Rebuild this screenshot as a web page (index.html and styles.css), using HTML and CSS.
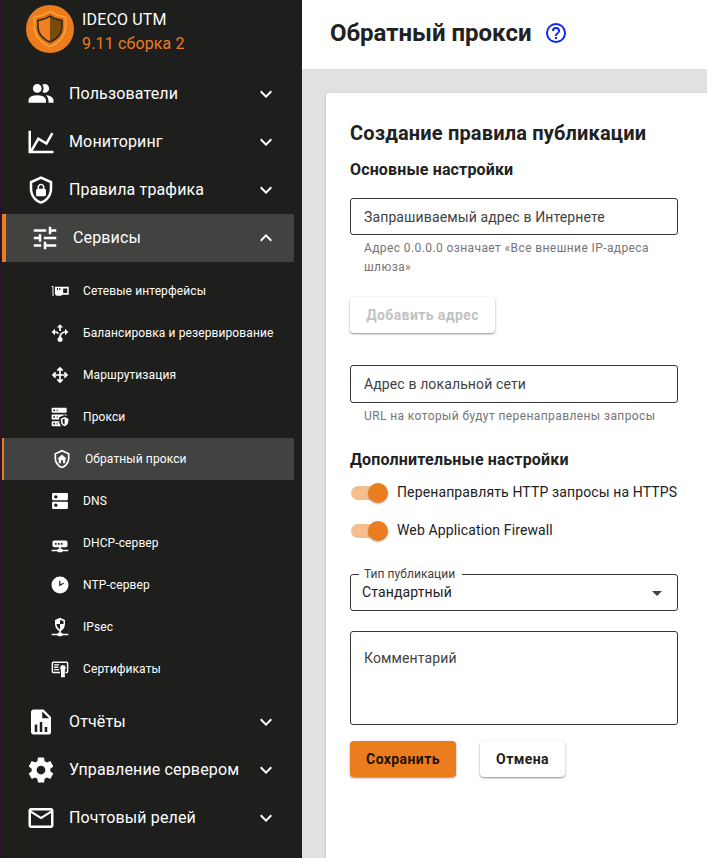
FILE: index.html
```html
<!DOCTYPE html>
<html lang="ru">
<head>
<meta charset="utf-8">
<title>Обратный прокси</title>
<link rel="stylesheet" href="styles.css">
</head>
<body>
<div class="app">
  <aside class="sidebar">
    <div class="brand">
      <svg class="logo" viewBox="0 0 48 48">
        <circle cx="24" cy="24" r="24" fill="#ec7d1e"/>
        <path d="M24 6.500C28.500 9.500 33.500 11.500 39.500 12.200V21C39.500 31.500 33 37.500 24 41.500 15 37.500 8.500 31.500 8.500 21V12.200C14.500 11.500 19.500 9.500 24 6.500Z" fill="#dc7018" stroke="#fd9f30" stroke-width="1.900"/>
        <path d="M24 11C27.500 13.500 31.500 15 36 15.500V22C36 29.500 31 34 24 37Z" fill="#7a4a0c"/>
        <path d="M24 11C20.500 13.500 16.500 15 12 15.500V22C12 29.500 17 34 24 37Z" fill="#f08020"/>
        <path d="M24 11C27.500 13.500 31.500 15 36 15.500V22C36 29.500 31 34 24 37 17 34 12 29.500 12 22V15.500C16.500 15 20.500 13.500 24 11Z" fill="none" stroke="#272421" stroke-width="1.500"/>
      </svg>
      <div class="brand-text">
        <div class="brand-name">IDECO UTM</div>
        <div class="brand-version">9.11 сборка 2</div>
      </div>
    </div>
    <nav>
      <a class="item"><svg class="icon" viewBox="0 0 24 24"><path d="M16 17V19H2V17S2 13 9 13 16 17 16 17M12.500 7.500A3.500 3.500 0 1 0 9 11A3.500 3.500 0 0 0 12.500 7.500M15.940 13A5.320 5.320 0 0 1 18 17V19H22V17S22 13.370 15.940 13M15 4A3.390 3.390 0 0 0 13.070 4.590A5 5 0 0 1 13.070 10.410A3.390 3.390 0 0 0 15 11A3.500 3.500 0 0 0 15 4Z"/></svg><span class="label">Пользователи</span><svg class="chevron" viewBox="0 0 24 24"><path d="M7.410,8.580L12,13.170L16.590,8.580L18,10L12,16L6,10Z"/></svg></a>
      <a class="item"><svg class="icon" viewBox="0 0 24 24"><path d="M16,11.780L20.240,4.450L21.970,5.450L16.740,14.500L10.230,10.750L5.460,19H22V21H2V3H4V17.540L9.500,8Z"/></svg><span class="label">Мониторинг</span><svg class="chevron" viewBox="0 0 24 24"><path d="M7.410,8.580L12,13.170L16.590,8.580L18,10L12,16L6,10Z"/></svg></a>
      <a class="item"><svg class="icon" viewBox="0 0 24 24"><path d="M21,11C21,16.550 17.160,21.740 12,23C6.840,21.740 3,16.550 3,11V5L12,1L21,5V11M12,21C15.750,20 19,15.540 19,11.220V6.300L12,3.180L5,6.300V11.220C5,15.540 8.250,20 12,21M14.800,11V9.500C14.800,8.100 13.400,7 12,7C10.600,7 9.200,8.100 9.200,9.500V11C8.600,11 8,11.600 8,12.200V15.700C8,16.400 8.600,17 9.200,17H14.700C15.400,17 16,16.400 16,15.800V12.300C16,11.600 15.400,11 14.800,11M13.500,11H10.500V9.500C10.500,8.700 11.200,8.200 12,8.200C12.800,8.200 13.500,8.700 13.500,9.500V11Z"/></svg><span class="label">Правила трафика</span><svg class="chevron" viewBox="0 0 24 24"><path d="M7.410,8.580L12,13.170L16.590,8.580L18,10L12,16L6,10Z"/></svg></a>
      <a class="item item-active"><svg class="icon" viewBox="0 0 24 24"><path d="M3,17V19H9V17H3M3,5V7H13V5H3M13,21V19H21V17H13V15H11V21H13M7,9V11H3V13H7V15H9V9H7M21,13V11H11V13H21M15,9H17V7H21V5H17V3H15V9Z"/></svg><span class="label">Сервисы</span><svg class="chevron" viewBox="0 0 24 24"><path d="M7.410,15.410L12,10.830L16.590,15.410L18,14L12,8L6,14Z"/></svg></a>
      <div class="submenu">
        <a class="sub"><svg class="icon" viewBox="0 0 24 24"><path fill-rule="evenodd" d="M2 6H4.200V18H3V7.300H2ZM6 7H22.500V16.500H14V17.700H7.500V16.500H6ZM8.300 8.500V10.800H9.600V8.500ZM11 8.500V10.800H12.300V8.500ZM15.800 9V14.500H20.600V9Z"/></svg><span class="label">Сетевые интерфейсы</span></a>
        <a class="sub"><svg class="icon" viewBox="0 0 24 24"><path d="M12 1.500 15.800 5.500H13V9.500H11V5.500H8.200ZM2 10.800 6 7V9.800C8 9.800 9.500 10.500 10.800 12L9.600 13.600C8.500 12.400 7.500 11.800 6 11.800V14.600ZM22 10.800 18 7V9.800C14 10.200 11.200 13 11 16.800A3.100 3.100 0 1 0 13.200 16.800C13.400 14 15 12.200 18 11.800V14.600Z"/></svg><span class="label">Балансировка и резервирование</span></a>
        <a class="sub"><svg class="icon" viewBox="0 0 24 24"><path d="M13,11H18L16.500,9.500L17.920,8.080L21.840,12L17.920,15.920L16.500,14.500L18,13H13V18L14.500,16.500L15.920,17.920L12,21.840L8.080,17.920L9.500,16.500L11,18V13H6L7.500,14.500L6.080,15.920L2.160,12L6.080,8.080L7.500,9.500L6,11H11V6L9.500,7.500L8.080,6.080L12,2.160L15.920,6.080L14.500,7.500L13,6V11Z"/></svg><span class="label">Маршрутизация</span></a>
        <a class="sub"><svg class="icon" viewBox="0 0 24 24"><path d="M3,1H19A1,1 0 0,1 20,2V6A1,1 0 0,1 19,7H3A1,1 0 0,1 2,6V2A1,1 0 0,1 3,1M3,9H19A1,1 0 0,1 20,10V10.670L17.500,9.560L11,12.440V15H3A1,1 0 0,1 2,14V10A1,1 0 0,1 3,9M3,17H11C11.060,19.250 12,21.400 13.460,23H3A1,1 0 0,1 2,22V18A1,1 0 0,1 3,17M8,5H9V3H8V5M8,13H9V11H8V13M8,21H9V19H8V21M4,3V5H6V3H4M4,11V13H6V11H4M4,19V21H6V19H4M17.500,12L22,14V17C22,19.780 20.080,22.370 17.500,23C14.920,22.370 13,19.780 13,17V14L17.500,12M17.500,13.940L15,15.060V17.720C15,19.260 16.070,20.700 17.500,21.060V13.940Z"/></svg><span class="label">Прокси</span></a>
        <a class="sub sub-active"><svg class="icon" viewBox="0 0 24 24"><path d="M21,11C21,16.550 17.160,21.740 12,23C6.840,21.740 3,16.550 3,11V5L12,1L21,5V11M12,21C15.750,20 19,15.540 19,11.220V6.300L12,3.180L5,6.300V11.220C5,15.540 8.250,20 12,21M12 6.500 17.500 11.800H16V17H13.200V13.500H10.800V17H8V11.800H6.500Z"/></svg><span class="label">Обратный прокси</span></a>
        <a class="sub"><svg class="icon" viewBox="0 0 24 24"><path d="M20.500 13h-17c-.55 0-1 .45-1 1v6.500c0 .55.45 1 1 1h17c.55 0 1-.45 1-1v-6.500c0-.55-.45-1-1-1zM7 19c-1.100 0-2-.9-2-2s.9-2 2-2 2 .9 2 2-.9 2-2 2zM20.500 2.500h-17c-.55 0-1 .45-1 1v6.500c0 .55.45 1 1 1h17c.55 0 1-.45 1-1V3.500c0-.55-.45-1-1-1zM7 9c-1.100 0-2-.9-2-2s.9-2 2-2 2 .9 2 2-.9 2-2 2z"/></svg><span class="label">DNS</span></a>
        <a class="sub"><svg class="icon" viewBox="0 0 24 24"><path d="M5 9C3.900 9 3 9.900 3 11V15C3 16.110 3.900 17 5 17H11V19H10C9.450 19 9 19.450 9 20H2V22H9C9 22.550 9.450 23 10 23H14C14.550 23 15 22.550 15 22H22V20H15C15 19.450 14.550 19 14 19H13V17H19C20.110 17 21 16.110 21 15V11C21 9.900 20.110 9 19 9H5M6 12H8V14H6V12M9.500 12H11.500V14H9.500V12M13 12H15V14H13V12Z"/></svg><span class="label">DHCP-сервер</span></a>
        <a class="sub"><svg class="icon" viewBox="0 0 24 24"><path fill-rule="evenodd" d="M12 1.800A10.200 10.200 0 1 0 12 22.200 10.200 10.200 0 1 0 12 1.800ZM11 7H12.500V11.100L16.100 9.300 16.700 10.600 11 13.400Z"/></svg><span class="label">NTP-сервер</span></a>
        <a class="sub"><svg class="icon" viewBox="0 0 24 24"><path fill-rule="evenodd" d="M12 1 18 3.500V8C18 12.200 15.600 15.500 13 16.700V19H14A1 1 0 0 1 15 20H22V22H15A1 1 0 0 1 14 23H10A1 1 0 0 1 9 22H2V20H9A1 1 0 0 1 10 19H11V16.700C8.400 15.500 6 12.200 6 8V3.500ZM12 3.500V8.500H7.800C8 11.500 9.800 14 12 15V8.500H16.200V4.900Z"/></svg><span class="label">IPsec</span></a>
        <a class="sub"><svg class="icon" viewBox="0 0 24 24"><path fill-rule="evenodd" d="M4 3H20A2 2 0 0 1 22 5V15A2 2 0 0 1 20 17H18.500V15.200H20.300V4.700H3.700V15.200H12V17H4A2 2 0 0 1 2 15V5A2 2 0 0 1 4 3ZM5 6.300H11V7.900H5ZM5 9.100H10V10.700H5ZM5 12H11V13.600H5ZM15.500 6.500 16.600 8.200 18.600 7.700 18 9.700 19.600 10.900 18 12.100 18.300 14 17.800 14V22H13.200V14H12.700L13 12.100 11.400 10.900 13 9.700 12.400 7.700 14.400 8.200Z"/></svg><span class="label">Сертификаты</span></a>
      </div>
      <a class="item"><svg class="icon" viewBox="0 0 24 24"><path d="M13,9H18.500L13,3.500V9M6,2H14L20,8V20A2,2 0 0,1 18,22H6C4.890,22 4,21.100 4,20V4C4,2.890 4.890,2 6,2M7,20H9V14H7V20M11,20H13V12H11V20M15,20H17V16H15V20Z"/></svg><span class="label">Отчёты</span><svg class="chevron" viewBox="0 0 24 24"><path d="M7.410,8.580L12,13.170L16.590,8.580L18,10L12,16L6,10Z"/></svg></a>
      <a class="item"><svg class="icon" viewBox="0 0 24 24"><path d="M12,15.500A3.500,3.500 0 0,1 8.500,12A3.500,3.500 0 0,1 12,8.500A3.500,3.500 0 0,1 15.500,12A3.500,3.500 0 0,1 12,15.500M19.430,12.970C19.470,12.650 19.500,12.330 19.500,12C19.500,11.670 19.470,11.340 19.430,11L21.540,9.370C21.730,9.220 21.780,8.950 21.660,8.730L19.660,5.270C19.540,5.050 19.270,4.960 19.050,5.050L16.560,6.050C16.040,5.660 15.500,5.320 14.870,5.070L14.500,2.420C14.460,2.180 14.250,2 14,2H10C9.750,2 9.540,2.180 9.500,2.420L9.130,5.070C8.500,5.320 7.960,5.660 7.440,6.050L4.950,5.050C4.730,4.960 4.460,5.050 4.340,5.270L2.340,8.730C2.210,8.950 2.270,9.220 2.460,9.370L4.570,11C4.530,11.340 4.500,11.670 4.500,12C4.500,12.330 4.530,12.650 4.570,12.970L2.460,14.630C2.270,14.780 2.210,15.050 2.340,15.270L4.340,18.730C4.460,18.950 4.730,19.030 4.950,18.950L7.440,17.940C7.960,18.340 8.500,18.680 9.130,18.930L9.500,21.580C9.540,21.820 9.750,22 10,22H14C14.250,22 14.460,21.820 14.500,21.580L14.870,18.930C15.500,18.670 16.040,18.340 16.560,17.940L19.050,18.950C19.270,19.030 19.540,18.950 19.660,18.730L21.660,15.270C21.780,15.050 21.730,14.780 21.540,14.630L19.430,12.970Z"/></svg><span class="label">Управление сервером</span><svg class="chevron" viewBox="0 0 24 24"><path d="M7.410,8.580L12,13.170L16.590,8.580L18,10L12,16L6,10Z"/></svg></a>
      <a class="item"><svg class="icon" viewBox="0 0 24 24"><path d="M22 6C22 4.900 21.100 4 20 4H4C2.900 4 2 4.900 2 6V18C2 19.100 2.900 20 4 20H20C21.100 20 22 19.100 22 18V6M20 6L12 11L4 6H20M20 18H4V8L12 13L20 8V18Z"/></svg><span class="label">Почтовый релей</span><svg class="chevron" viewBox="0 0 24 24"><path d="M7.410,8.580L12,13.170L16.590,8.580L18,10L12,16L6,10Z"/></svg></a>
    </nav>
  </aside>
  <main class="main">
    <header class="topbar">
      <h1>Обратный прокси</h1>
      <svg class="help" viewBox="0 0 24 24"><path d="M11,18H13V16H11V18M12,2A10,10 0 0,0 2,12A10,10 0 0,0 12,22A10,10 0 0,0 22,12A10,10 0 0,0 12,2M12,20C7.590,20 4,16.410 4,12C4,7.590 7.590,4 12,4C16.410,4 20,7.590 20,12C20,16.410 16.410,20 12,20M12,6A4,4 0 0,0 8,10H10A2,2 0 0,1 12,8A2,2 0 0,1 14,10C14,12 11,11.750 11,15H13C13,12.750 16,12.500 16,10A4,4 0 0,0 12,6Z"/></svg>
    </header>
    <section class="card">
      <h2>Создание правила публикации</h2>
      <h3>Основные настройки</h3>
      <div class="field field-source"><span>Запрашиваемый адрес в Интернете</span></div>
      <p class="hint hint-source">Адрес 0.0.0.0 означает «Все внешние IP-адреса шлюза»</p>
      <button class="btn btn-add" disabled>Добавить адрес</button>
      <div class="field field-local"><span>Адрес в локальной сети</span></div>
      <p class="hint">URL на который будут перенаправлены запросы</p>
      <h3 class="extra">Дополнительные настройки</h3>
      <label class="toggle"><span class="track"><span class="thumb"></span></span><span>Перенаправлять HTTP запросы на HTTPS</span></label>
      <label class="toggle"><span class="track"><span class="thumb"></span></span><span>Web Application Firewall</span></label>
      <fieldset class="select">
        <legend>Тип публикации</legend>
        <div class="select-row"><span>Стандартный</span><span class="caret"></span></div>
      </fieldset>
      <div class="field field-comment"><span>Комментарий</span></div>
      <div class="actions">
        <button class="btn btn-primary">Сохранить</button>
        <button class="btn btn-cancel">Отмена</button>
      </div>
    </section>
  </main>
</div>
</body>
</html>
```
FILE: styles.css
```css
* { box-sizing: border-box; }
body { margin: 0; font-family: Roboto, "Liberation Sans", sans-serif; color: #212121; }
h1, h2, h3, p { margin: 0; }
.app { display: flex; width: 707px; height: 858px; overflow: hidden; background: #fff; }

.sidebar { flex: none; width: 302px; border-left: 2px solid #28132b; background: #1e1e1c; color: #fff; }
.brand { display: flex; height: 70px; padding: 5px 0 0 24px; gap: 8px; }
.logo { width: 48px; height: 48px; }
.brand-text { padding-top: 3px; font-size: 16px; line-height: 24px; letter-spacing: 0.144px; }
.brand-version { color: #ec7d1e; }
.icon, .chevron, .help { display: block; flex: none; }
.icon, .chevron { fill: #fff; }
.item { display: flex; align-items: center; width: 292px; height: 48px; padding: 0 16px 0 24px; font-size: 16px; line-height: 24px; }
.item .icon { width: 30px; height: 30px; margin-right: 13px; }
.item .label { letter-spacing: 0.144px; flex: 1; white-space: nowrap; }
.chevron { width: 24px; height: 24px; }
.item-active { border-left: 4px solid #ec7d1e; background: #424240; }
.submenu { padding: 8px 0; }
.sub { display: flex; align-items: center; width: 292px; height: 42px; padding-left: 48px; font-size: 12px; line-height: 18px; white-space: nowrap; }
.sub .icon { width: 20px; height: 20px; margin-right: 13px; }
.sub .label { letter-spacing: 0.108px; }
.sub-active { border-left: 2px solid #ec7d1e; background: #424240; }

.main { display: flex; flex-direction: column; flex: 1; min-width: 0; background: #e1e1e1; }
.topbar { display: flex; align-items: center; flex: none; height: 69px; padding: 0 0 3px 28px; gap: 12px; background: #fff; }
h1 { font-size: 24px; line-height: 32px; font-weight: 700; white-space: nowrap; }
.help { width: 24px; height: 24px; fill: #0b24fb; }
.card { flex: 1; margin: 24px 0 0 24px; padding: 24px 29px 0 24px; border-top-left-radius: 4px; background: #fff; box-shadow: 0 1px 3px rgba(0, 0, 0, 0.2); }
h2 { font-size: 20px; line-height: 32px; font-weight: 700; letter-spacing: 0.17px; white-space: nowrap; }
h3 { padding-top: 9px; font-size: 16px; line-height: 24px; font-weight: 700; letter-spacing: 0.144px; }
.field { display: flex; align-items: center; width: 328px; height: 38px; padding: 0 13px; border: 1px solid #363636; border-radius: 3px; color: #424242; font-size: 14px; line-height: 20px; letter-spacing: 0.126px; }
.field-source { height: 37px; margin-top: 16px; }
.hint { padding: 4px 0 0 14px; color: #757575; font-size: 12px; line-height: 19px; letter-spacing: 0.4px; white-space: nowrap; }
.hint-source { white-space: normal; }
.btn { display: block; height: 36px; padding: 0; border: 0; border-radius: 4px; background: #fff; color: #212121; font: 700 14px/36px Roboto, sans-serif; letter-spacing: 0.4px; box-shadow: 0 1px 3px rgba(0, 0, 0, 0.28), 0 1px 1px rgba(0, 0, 0, 0.2); }
.btn-add { width: 145px; margin-top: 20px; color: #c2c2c2; }
.field-local { margin-top: 32px; }
.extra { padding: 22px 0 1px; letter-spacing: 0.17px; }
.toggle { display: flex; align-items: center; height: 38px; font-size: 14px; line-height: 20px; letter-spacing: 0.126px; white-space: nowrap; }
.track { display: flex; justify-content: flex-end; align-items: center; width: 36px; height: 14px; margin: 1px 10px 0 1px; border-radius: 7px; background: #f5be8e; }
.thumb { width: 20px; height: 20px; margin-right: -1px; border-radius: 50%; background: #ec7d1e; box-shadow: 0 1px 2px rgba(0, 0, 0, 0.3); }
.select { width: 328px; height: 45px; margin: 17px 0 0; padding: 0 15px 0 11px; border: 1px solid #363636; border-radius: 3px; }
legend { margin-left: -3px; padding: 0 7px 0 5px; color: #424242; font-size: 12px; line-height: 16px; letter-spacing: 0.05px; }
.select-row { display: flex; justify-content: space-between; align-items: center; height: 20px; font-size: 14px; line-height: 20px; letter-spacing: 0.126px; }
.caret { margin-top: 2px; border: 5px solid transparent; border-top-color: #424242; border-bottom: 0; }
.field-comment { align-items: flex-start; height: 94px; margin-top: 20px; padding-top: 16px; }
.actions { display: flex; gap: 24px; margin-top: 16px; }
.btn-primary { width: 106px; background: #ec7d1e; color: #1f1004; }
.btn-cancel { width: 85px; }
```
